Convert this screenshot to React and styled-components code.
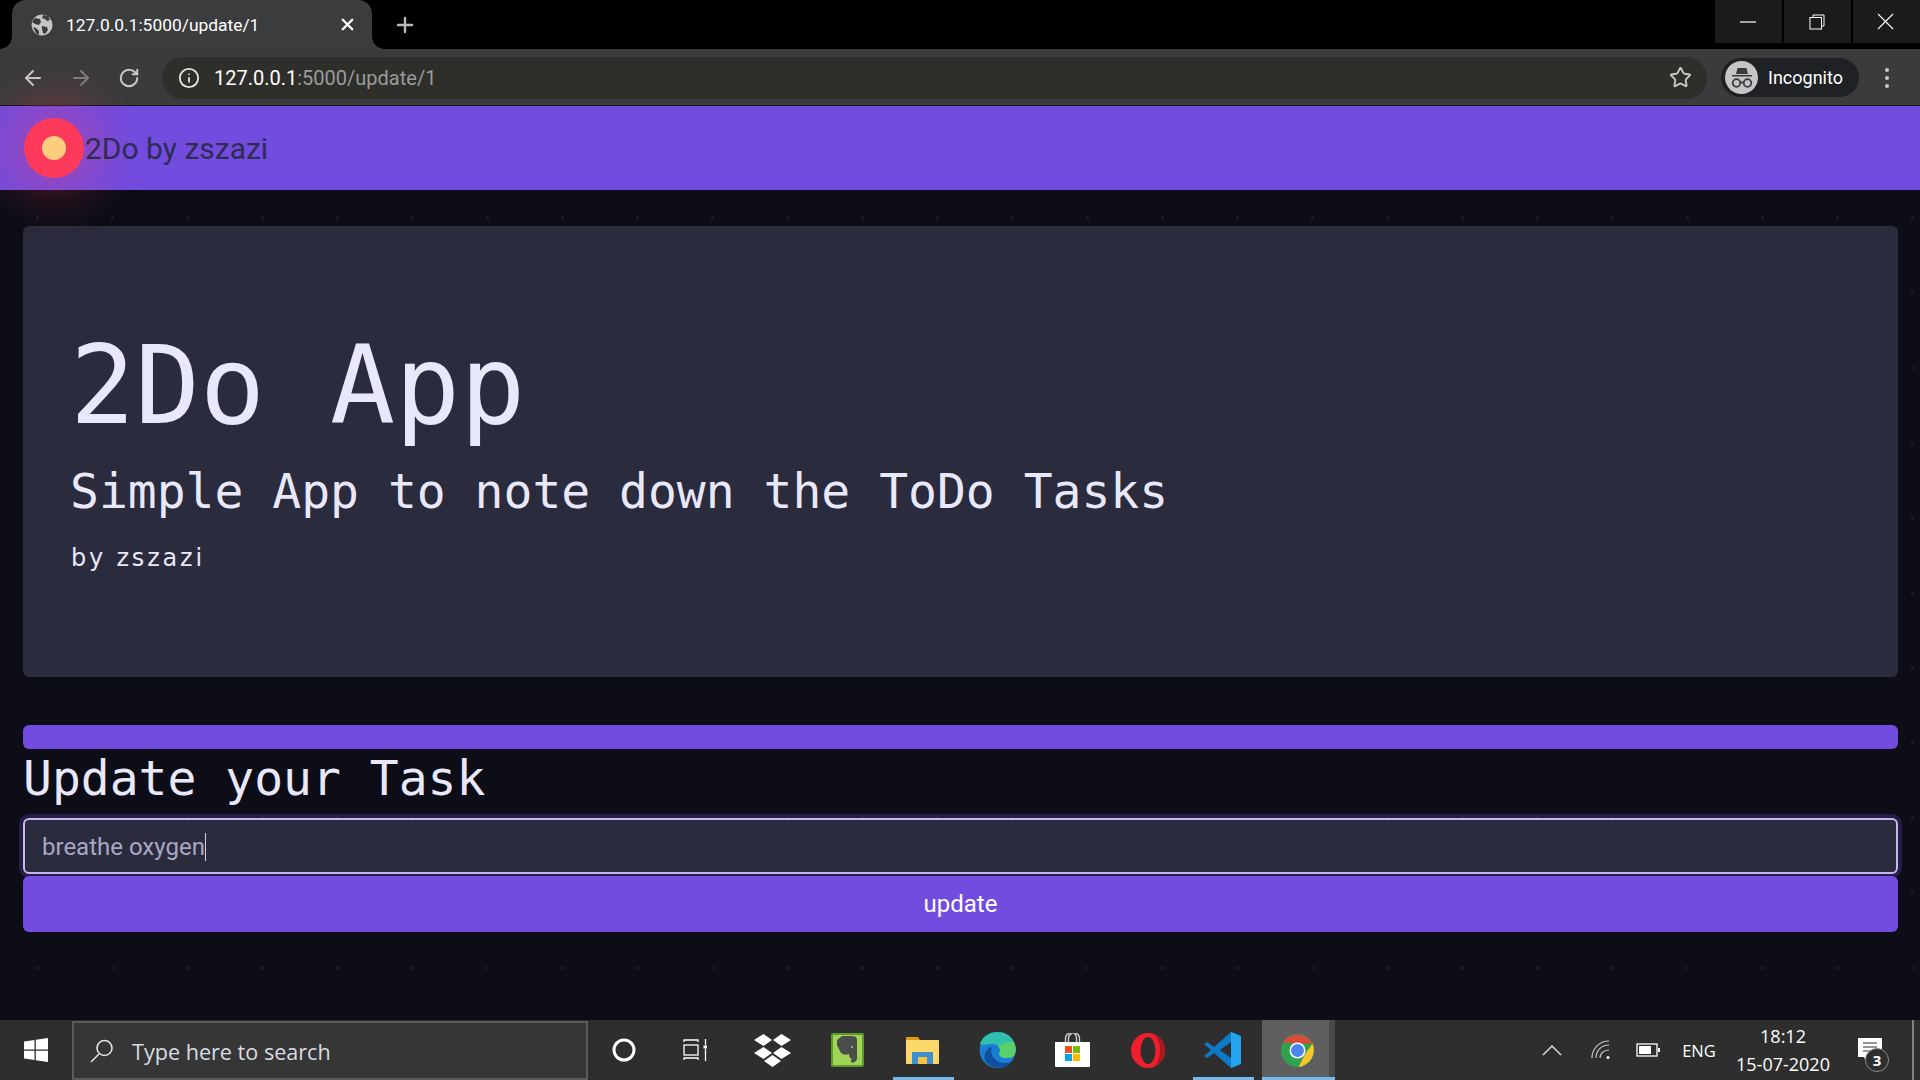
import React from "react";
import styled, { createGlobalStyle } from "styled-components";
import { ArrowLeft, ArrowRight, RotateCw, Plus, X, Info, Star } from "lucide-react";

const Global = createGlobalStyle`
  html, body { margin: 0; padding: 0; background: #0c0d16; }
  * { box-sizing: border-box; }
`;
const Page = styled.div`
  width: 1920px; height: 1080px; overflow: hidden; display: flex; flex-direction: column;
  font-family: Roboto, "Liberation Sans", sans-serif; background: #0c0d16;
`;
const TabStrip = styled.div`
  height: 49px; background: #000; display: flex; align-items: flex-start; padding-left: 12px;
`;
const Tab = styled.div`
  width: 360px; height: 49px; background: #3b3c3d; border-radius: 14px 14px 0 0;
  display: flex; align-items: center; padding: 0 15px 0 19px; color: #fff; font-size: 17.400px; position: relative;
  svg { flex: none; }
  &::before, &::after {
    content: ""; position: absolute; bottom: 0; width: 12px; height: 12px;
  }
  &::before { left: -12px; background: radial-gradient(circle at 0 0, transparent 11.500px, #3b3c3d 12px); }
  &::after { right: -12px; background: radial-gradient(circle at 100% 0, transparent 11.500px, #3b3c3d 12px); }
`;
const TabTitle = styled.span`flex: 1; margin-left: 13px; white-space: nowrap;`;
const NewTab = styled.div`
  margin: 13px 0 0 21px; color: #b9b9b9; display: flex;
`;
const WinButtons = styled.div`margin-left: auto; display: flex; gap: 2px;`;
const WinButton = styled.div`
  width: 67px; height: 43px; background: #1b1b1b; display: flex; align-items: center; justify-content: center; color: #fff;
  padding-right: 2px;
`;
const Toolbar = styled.div`
  height: 57px; background: #3a3b3c; border-bottom: 1px solid #141414; display: flex; align-items: center; padding: 1px 0 0 0;
`;
const NavIcon = styled.div`
  width: 48px; display: flex; justify-content: center; color: ${p => p.$dim ? "#7d7e7f" : "#c6c7c8"};
  margin-left: ${p => p.$first ? "9px" : "0"};
`;
const Omni = styled.div`
  margin-left: 9px; width: 1545px; height: 42px; border-radius: 21px; background: #2e2f2b;
  display: flex; align-items: center; padding: 0 15px 0 16px; font-size: 20px; color: #9a9b9b;
`;
const Address = styled.span`margin-left: 14px; flex: 1; b { font-weight: 400; color: #fff; }`;
const Pill = styled.div`
  margin-left: 14px; width: 138px; height: 39px; border-radius: 20px; background: #202124;
  display: flex; align-items: center; padding-left: 4px; color: #fff; font-size: 18px;
`;
const Avatar = styled.div`
  width: 33px; height: 33px; border-radius: 50%; background: #c4c5c6; margin-right: 10px;
  display: flex; align-items: center; justify-content: center;
`;
const MenuDots = styled.div`
  margin-left: 26px; display: flex; flex-direction: column; gap: 4px;
  i { width: 4px; height: 4px; border-radius: 50%; background: #c6c7c8; display: block; }
`;
const Navbar = styled.nav`
  height: 84px; background: #724cdf; display: flex; align-items: center; padding-left: 24px; flex: none;
`;
const Dot = styled.div`
  width: 60px; height: 60px; border-radius: 50%; background: #fd3a5c; position: relative; z-index: 2;
  box-shadow: 0 0 50px 16px rgba(253, 58, 92, 0.32);
  display: flex; align-items: center; justify-content: center; flex: none;
  &::after { content: ""; width: 24px; height: 24px; border-radius: 50%; background: #fbcd7d; }
`;
const Brand = styled.a`
  margin-left: 1px; font-size: 30px; color: #2f2b52; position: relative; z-index: 3;
`;
const Main = styled.main`
  flex: 1; padding: 36px 22px 0 23px; display: flex; flex-direction: column; background-color: #0c0d16;
  background-image: radial-gradient(circle, #1b1c25 1.500px, transparent 2px);
  background-size: 75px 75px; background-position: 0 -9.500px;
`;
const Jumbo = styled.section`
  height: 451px; background: #2a2b3c; border-radius: 6px; padding: 95px 47px 0;
  color: #e9e8fb; font-family: "DejaVu Sans Mono", monospace;
`;
const Title = styled.h1`
  margin: 0; font-size: 108px; font-weight: 400; line-height: 130px; white-space: nowrap;
`;
const Sub = styled.h2`
  margin: 11px 0 0; font-size: 48px; font-weight: 400; line-height: 58px; white-space: nowrap;
`;
const By = styled.p`
  margin: 22px 0 0 1px; font-family: "DejaVu Sans", cursive; font-size: 24px; line-height: 32px; font-weight: 400;
  letter-spacing: 2.800px;
`;
const Bar = styled.div`
  margin-top: 48px; height: 24px; flex: none; border-radius: 6px; background: #724cdf;
`;
const Heading = styled.h2`
  margin: 0; height: 69px; font-family: "DejaVu Sans Mono", monospace; font-size: 48px; font-weight: 400;
  line-height: 58px; color: #e9e8fb; white-space: nowrap;
`;
const Form = styled.div`display: flex; flex-direction: column;`;
const Input = styled.div`
  height: 56px; border-radius: 6px; background: #2a2b3c; border: 2px solid #c5b8ee;
  box-shadow: 0 0 0 4px rgba(114, 76, 223, 0.25); display: flex; align-items: center;
  padding: 1px 0 0 17px; color: #a9a7c6; font-size: 24px; position: relative; z-index: 1;
`;
const Caret = styled.span`
  width: 1px; height: 28px; background: #d5d3e8; display: inline-block;
`;
const Button = styled.button`
  height: 56px; margin-top: 2px; border: 0; border-radius: 6px; background: #724cdf; color: #fff;
  font-family: inherit; font-size: 24px;
`;
const Taskbar = styled.footer`
  height: 60px; flex: none; background: #2e2e2e; display: flex; align-items: stretch; position: relative;
`;
const Start = styled.div`width: 72px; display: flex; align-items: center; justify-content: center;`;
const Search = styled.div`
  width: 516px; margin-top: 1px; border: 2px solid #5b5b5b; background: #363636;
  display: flex; align-items: center; padding: 1px 0 0 16px; color: #d7dde2; font-family: "Open Sans", sans-serif; font-size: 21.600px;
  span { margin-left: 18px; }
`;
const Slot = styled.div`
  width: ${p => p.$w || 75}px; flex: none; display: flex; align-items: center; justify-content: center; position: relative;
  margin-right: ${p => p.$after || 0}px;
  ${p => p.$active ? "background: linear-gradient(to right, transparent 2px, #5f5f5f 2px, #5f5f5f 69px, #4a4a4a 69px);" : ""}
  ${p => p.$line ? `&::after { content: ''; position: absolute; left: ${p.$active ? 2 : 8}px; right: ${p.$active ? 0 : 6}px; bottom: 0; height: 3px; background: #76b9ed; }` : ""}
`;
const Tray = styled.div`
  margin-left: auto; display: flex; align-items: center; color: #fff; font-family: "Open Sans", sans-serif; padding-right: 14px;
`;
const TrayItem = styled.div`
  width: ${p => p.$w}px; display: flex; justify-content: center; font-size: 16.500px; position: relative;
`;
const Clock = styled.div`
  width: 118px; text-align: center; font-size: 18px; line-height: 28px; color: #fff; white-space: nowrap;
`;
const Badge = styled.div`
  position: absolute; left: 23px; top: 11px; width: 24px; height: 24px; border-radius: 50%;
  border: 1px solid #8a8a8a; background: #2e2e2e; color: #fff; font-size: 15px; font-weight: 700;
  display: flex; align-items: center; justify-content: center;
`;
const EdgeLine = styled.div`width: 2px; background: #808080; flex: none; margin-right: 6px;`;

const Globe = () => (
  <svg width="22" height="22" viewBox="0 0 22 22"><circle cx="11" cy="11" r="10.5" fill="#c4c5c6"/>
    <path d="M4 4l5 1 1 3-2 3-4-1-3-2zM12 1l5 1 2 4-3 1-2-2-3-1zM11 12l5 1 1 3-3 4-2-1-1-4zM2 13l3 1 3 3v4l-3-2z" fill="#3b3c3d"/></svg>
);
const Spy = () => (
  <svg width="26" height="22" viewBox="0 0 26 22"><path d="M7 7l1.5-6h9L19 7zM3 8h20v1.6H3z" fill="#3a3b3c"/>
    <g fill="none" stroke="#3a3b3c" strokeWidth="1.8"><circle cx="7.5" cy="16" r="3.8"/><circle cx="18.5" cy="16" r="3.8"/><path d="M11 15.5h4"/></g></svg>
);
const WinLogo = () => (
  <svg width="24" height="24" viewBox="0 0 24 24"><path fill="#fff" d="M0 3.500l10.500-1.500v9.400H0zM11.800 1.800L24 0v11.400H11.800zM0 12.700h10.500V22L0 20.500zM11.800 12.700H24V24l-12.200-1.800z"/></svg>
);
const SearchGlass = () => (
  <svg width="24" height="24" viewBox="0 0 24 24" fill="none" stroke="#e4e4e4" strokeWidth="1.600"><circle cx="14.500" cy="9" r="7.500"/><path d="M9 15L1 23"/></svg>
);
const TaskView = () => (
  <svg width="25" height="22" viewBox="0 0 25 22" fill="none" stroke="#fff" strokeWidth="1.300"><path d="M1 3V1h14v2M1 21v-2h14v2"/><rect x="1" y="6" width="14" height="10"/><path d="M22.500 0v6M22.500 10v12"/><rect x="20.500" y="6.500" width="3.500" height="3" fill="#fff" stroke="none"/></svg>
);
const Dropbox = () => (
  <svg width="37" height="33" viewBox="0 0 37 33" fill="#fff"><path d="M9.500 0l8.500 6-8.500 6L0 6zM27.500 0L37 6l-9.500 6-8.500-6zM9.500 13l8.500 6-8.500 6L0 19zM27.500 13l9.500 6-9.500 6-8.500-6zM18.500 21l8.500 6-8.500 6-8.500-6z"/></svg>
);
const Evernote = () => (
  <svg width="33" height="34" viewBox="0 0 33 34"><rect width="33" height="34" rx="2" fill="#5d9a2e"/><rect x="2" y="2" width="29" height="30" fill="#9fd555"/>
    <path d="M6 7l5-4h10q5 0 5 4v15q1 3-1 6-3 3-5 1-1-3 2-3-4 0-4-5-4 2-8-1l-4-8z" fill="#4a4d4c"/><circle cx="21" cy="14" r="1" fill="#a5d85e"/></svg>
);
const Explorer = () => (
  <svg width="33" height="27" viewBox="0 0 33 27"><path d="M0 0h12l2 3v4H0z" fill="#dd9c0a"/><path d="M0 3h32q1 0 1 1v22q0 1-1 1H1q-1 0-1-1z" fill="#fcd769"/>
    <path d="M6 27V15h21v12z" fill="#3f8fcc"/><path d="M12 20h9v7h-9z" fill="#f5c242"/></svg>
);
const Edge = () => (
  <svg width="37" height="36" viewBox="0 0 37 36"><circle cx="18.500" cy="18" r="18" fill="#1a7fd2"/>
    <path d="M1 12C5-2 28-5 35 10c3 7 2 13-2 15-5 2-12 1-13-3 3-5 0-10-7-10-5 0-9 2-12 0z" fill="#2fc0b0"/>
    <path d="M35 10c3 7 2 13-2 15-5 2-12 1-13-3 2-3 1-6-1-8 6-3 11-5 16-4z" fill="#5ad06a"/>
    <path d="M13 15c-3 7 3 17 14 16 3 0 5-1 7-3-6 9-19 10-26 3C3 26 6 16 13 15z" fill="#0f4f9c"/></svg>
);
const Store = () => (
  <svg width="35" height="34" viewBox="0 0 35 34"><path d="M10.500 10V6q0-6 6-6h2q6 0 6 6v4M13.500 10V5q0-3 3-4M21.500 10V5q0-3-2-4" fill="none" stroke="#c9c9c9" strokeWidth="1.400"/>
    <path d="M0 9h35v24q0 1-1 1H1q-1 0-1-1z" fill="#fff"/><rect x="10" y="13" width="7" height="7" fill="#f25022"/><rect x="18" y="13" width="7" height="7" fill="#7fba00"/><rect x="10" y="21" width="7" height="7" fill="#00a4ef"/><rect x="18" y="21" width="7" height="7" fill="#ffb900"/></svg>
);
const Opera = () => (
  <svg width="34" height="35" viewBox="0 0 34 35"><ellipse cx="17" cy="17.500" rx="17" ry="17.500" fill="#f01f2e"/><ellipse cx="17" cy="17.500" rx="7.500" ry="13.500" fill="#2e2e2e"/>
    <path d="M22 1c7 3 12 9 12 16.500S29 31 22 34c5-4 7-10 7-16.500S27 5 22 1z" fill="#a81a20"/></svg>
);
const VSCode = () => (
  <svg width="37" height="36" viewBox="0 0 37 36"><path d="M27 0l10 4v28l-10 4L10 21l-7 5-3-2 7-6-7-6 3-2 7 5z" fill="#0e7ac6"/><path d="M27 0l10 4v28l-10 4z" fill="#22a4ee"/><path d="M27 10L16 18l11 8z" fill="#2e2e2e"/></svg>
);
const Chrome = () => (
  <svg width="33" height="33" viewBox="-16.500 -16.500 33 33"><circle r="16.500" fill="#2fa14f"/>
    <path d="M-14.500-8C-9-18.500 9-18.500 15-7L0-7z" fill="#dc4a3c"/><path d="M15-7C19 2 14 14 1 16.500L8 3z" fill="#fbc42d"/><circle r="8" fill="#fff"/><circle r="6.500" fill="#4a86ee"/></svg>
);
const Chevron = () => (<svg width="20" height="12" viewBox="0 0 20 12" fill="none" stroke="#e6e6e6" strokeWidth="1.400"><path d="M1 11l9-9 9 9"/></svg>);
const Wifi = () => (
  <svg width="20" height="20" viewBox="0 0 20 20" fill="none" stroke="#c9c9c9" strokeWidth="1.200"><path d="M1 18C1 9 8 1 18 1M5 18c0-7 5-13 13-13M9 18c0-4 3-8 9-8"/><circle cx="17" cy="17.500" r="1.600" fill="#eee" stroke="none"/></svg>
);
const Battery = () => (
  <svg width="24" height="14" viewBox="0 0 24 14"><rect x="1" y="1" width="20" height="12" fill="none" stroke="#fff" strokeWidth="1.300"/><rect x="3" y="3" width="12" height="8" fill="#fff"/><rect x="22" y="5" width="2" height="4" fill="#fff"/></svg>
);
const Notif = () => (
  <svg width="26" height="26" viewBox="0 0 26 26"><path d="M1 1h24v19H11l-2 5-2-5H1z" fill="#fff"/><path d="M6 6h14M6 10h14M6 14h14" stroke="#2e2e2e" strokeWidth="1.200"/></svg>
);

export default function App() {
  return (
    <Page>
      <Global />
      <TabStrip>
        <Tab><Globe /><TabTitle>127.0.0.1:5000/update/1</TabTitle><X size={19} strokeWidth={3} /></Tab>
        <NewTab><Plus size={24} strokeWidth={2.4} /></NewTab>
        <WinButtons>
          <WinButton><svg width="16" height="2" viewBox="0 0 16 2"><path d="M0 1h16" stroke="#fff" strokeWidth="1.200"/></svg></WinButton>
          <WinButton>
            <svg width="16" height="16" viewBox="0 0 16 16" fill="none" stroke="#fff"><path d="M4 3V1h11v11h-2"/><rect x="1" y="3.500" width="11.500" height="11.500"/></svg>
          </WinButton>
          <WinButton><svg width="17" height="17" viewBox="0 0 17 17"><path d="M1 1l15 15M16 1L1 16" stroke="#fff" strokeWidth="1.100"/></svg></WinButton>
        </WinButtons>
      </TabStrip>
      <Toolbar>
        <NavIcon $first><ArrowLeft size={24} strokeWidth={2} /></NavIcon>
        <NavIcon $dim><ArrowRight size={24} strokeWidth={2} /></NavIcon>
        <NavIcon><RotateCw size={22} strokeWidth={2.2} /></NavIcon>
        <Omni>
          <Info size={22} color="#e4e4e4" strokeWidth={2} />
          <Address><b>127.0.0.1</b>:5000/update/1</Address>
          <Star size={23} color="#c6c7c8" strokeWidth={2} />
        </Omni>
        <Pill><Avatar><Spy /></Avatar>Incognito</Pill>
        <MenuDots><i /><i /><i /></MenuDots>
      </Toolbar>
      <Navbar><Dot /><Brand>2Do by zszazi</Brand></Navbar>
      <Main>
        <Jumbo>
          <Title>2Do App</Title>
          <Sub>Simple App to note down the ToDo Tasks</Sub>
          <By>by zszazi</By>
        </Jumbo>
        <Bar />
        <Heading>Update your Task</Heading>
        <Form>
          <Input>breathe oxygen<Caret /></Input>
          <Button>update</Button>
        </Form>
      </Main>
      <Taskbar>
        <Start><WinLogo /></Start>
        <Search><SearchGlass /><span>Type here to search</span></Search>
        <Slot $w={72}><svg width="24" height="24" viewBox="0 0 24 24"><circle cx="12" cy="12" r="10" fill="none" stroke="#fff" strokeWidth="3"/></svg></Slot>
        <Slot $w={70}><TaskView /></Slot>
        <Slot $w={85}><Dropbox /></Slot>
        <Slot $w={65} $after={5}><Evernote /></Slot>
        <Slot $line><Explorer /></Slot>
        <Slot><Edge /></Slot>
        <Slot><Store /></Slot>
        <Slot><Opera /></Slot>
        <Slot $line><VSCode /></Slot>
        <Slot $active $line><Chrome /></Slot>
        <Tray>
          <TrayItem $w={56}><Chevron /></TrayItem>
          <TrayItem $w={42}><Wifi /></TrayItem>
          <TrayItem $w={52}><Battery /></TrayItem>
          <TrayItem $w={50}>ENG</TrayItem>
          <Clock>18:12<br />15-07-2020</Clock>
          <TrayItem $w={56}><Notif /><Badge>3</Badge></TrayItem>
        </Tray>
        <EdgeLine />
      </Taskbar>
    </Page>
  );
}
